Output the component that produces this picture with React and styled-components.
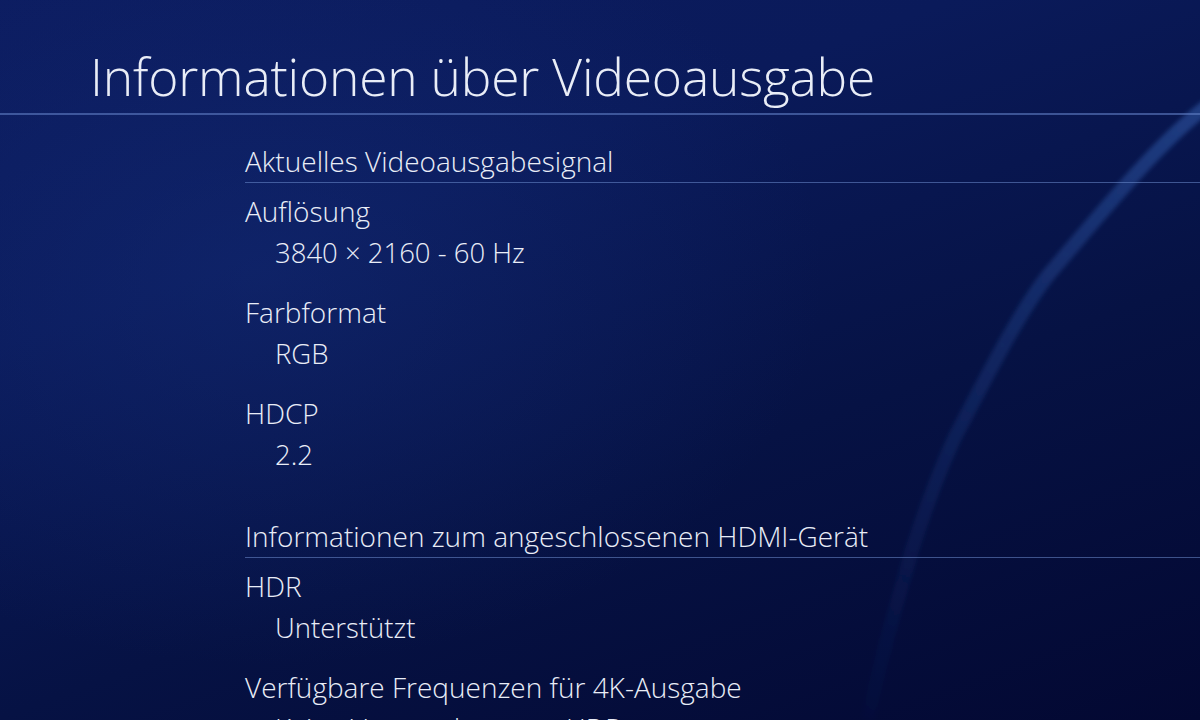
import React from "react";
import styled, { createGlobalStyle } from "styled-components";

const TEXT_COLOR = "#e9edf7";
const LINE_COLOR = "rgba(110, 140, 205, 0.55)";

const GlobalStyle = createGlobalStyle`
  html, body {
    margin: 0;
    padding: 0;
    background: #06103f;
  }
  body {
    font-family: "Open Sans", "Noto Sans", sans-serif;
    font-weight: 300;
    color: ${TEXT_COLOR};
  }
`;

const Screen = styled.div`
  position: relative;
  width: 1200px;
  height: 720px;
  overflow: hidden;
  background:
    radial-gradient(ellipse 800px 560px at 22% 38%, rgba(22, 48, 125, 0.4), rgba(22, 48, 125, 0) 70%),
    linear-gradient(160deg, #0c1c60 0%, #0a1a5a 30%, #061244 62%, #030832 100%);
`;

const Swoosh = styled.svg`
  position: absolute;
  inset: 0;
  pointer-events: none;
`;

const Foreground = styled.div`
  position: relative;
`;

const TitleBar = styled.header`
  padding: 46px 0 7px 90px;
  border-bottom: 2px solid rgba(95, 125, 195, 0.6);
`;

const Title = styled.h1`
  margin: 0;
  font-size: 51.5px;
  font-weight: 300;
  line-height: 60px;
  letter-spacing: -0.2px;
`;

const Content = styled.main`
  padding: 26px 0 0 245px;
`;

const SectionHeader = styled.h2`
  margin: 0 0 8px 0;
  font-size: 28px;
  font-weight: 300;
  line-height: 41px;
  border-bottom: 1px solid ${LINE_COLOR};
`;

const Section = styled.section`
  & + & {
    margin-top: 41px;
  }
`;

const Item = styled.div`
  & + & {
    margin-top: 19px;
  }
`;

const Label = styled.div`
  font-size: 28px;
  line-height: 41px;
`;

const Value = styled.div`
  font-size: 27.5px;
  line-height: 41px;
  padding-left: 30px;
`;

const sections = [
  {
    title: "Aktuelles Videoausgabesignal",
    items: [
      { label: "Auflösung", value: "3840 × 2160 - 60 Hz" },
      { label: "Farbformat", value: "RGB" },
      { label: "HDCP", value: "2.2" },
    ],
  },
  {
    title: "Informationen zum angeschlossenen HDMI-Gerät",
    items: [
      { label: "HDR", value: "Unterstützt" },
      { label: "Verfügbare Frequenzen für 4K-Ausgabe", value: "Keine Verwendung von HDR" },
    ],
  },
];

function Background() {
  return (
    <Swoosh width="1200" height="720" viewBox="0 0 1200 720">
      <defs>
        <linearGradient id="arc" gradientUnits="userSpaceOnUse" x1="1200" y1="110" x2="870" y2="720">
          <stop offset="0" stopColor="#3a6cc0" stopOpacity="0.45" />
          <stop offset="0.45" stopColor="#2f5cb0" stopOpacity="0.26" />
          <stop offset="1" stopColor="#24489a" stopOpacity="0.03" />
        </linearGradient>
        <filter id="soft" x="-10%" y="-10%" width="120%" height="120%">
          <feGaussianBlur stdDeviation="2" />
        </filter>
      </defs>
      <path
        d="M1210 104 C1160 140 1100 215 1050 273 C1020 310 985 380 957 433 C940 468 925 510 912 550 C895 610 880 660 868 720"
        fill="none"
        stroke="url(#arc)"
        strokeWidth="14"
        filter="url(#soft)"
      />
    </Swoosh>
  );
}

function App() {
  return (
    <Screen>
      <GlobalStyle />
      <Background />
      <Foreground>
        <TitleBar>
          <Title>Informationen über Videoausgabe</Title>
        </TitleBar>
        <Content>
          {sections.map((section) => (
            <Section key={section.title}>
              <SectionHeader>{section.title}</SectionHeader>
              {section.items.map((item) => (
                <Item key={item.label}>
                  <Label>{item.label}</Label>
                  <Value>{item.value}</Value>
                </Item>
              ))}
            </Section>
          ))}
        </Content>
      </Foreground>
    </Screen>
  );
}

export default App;
